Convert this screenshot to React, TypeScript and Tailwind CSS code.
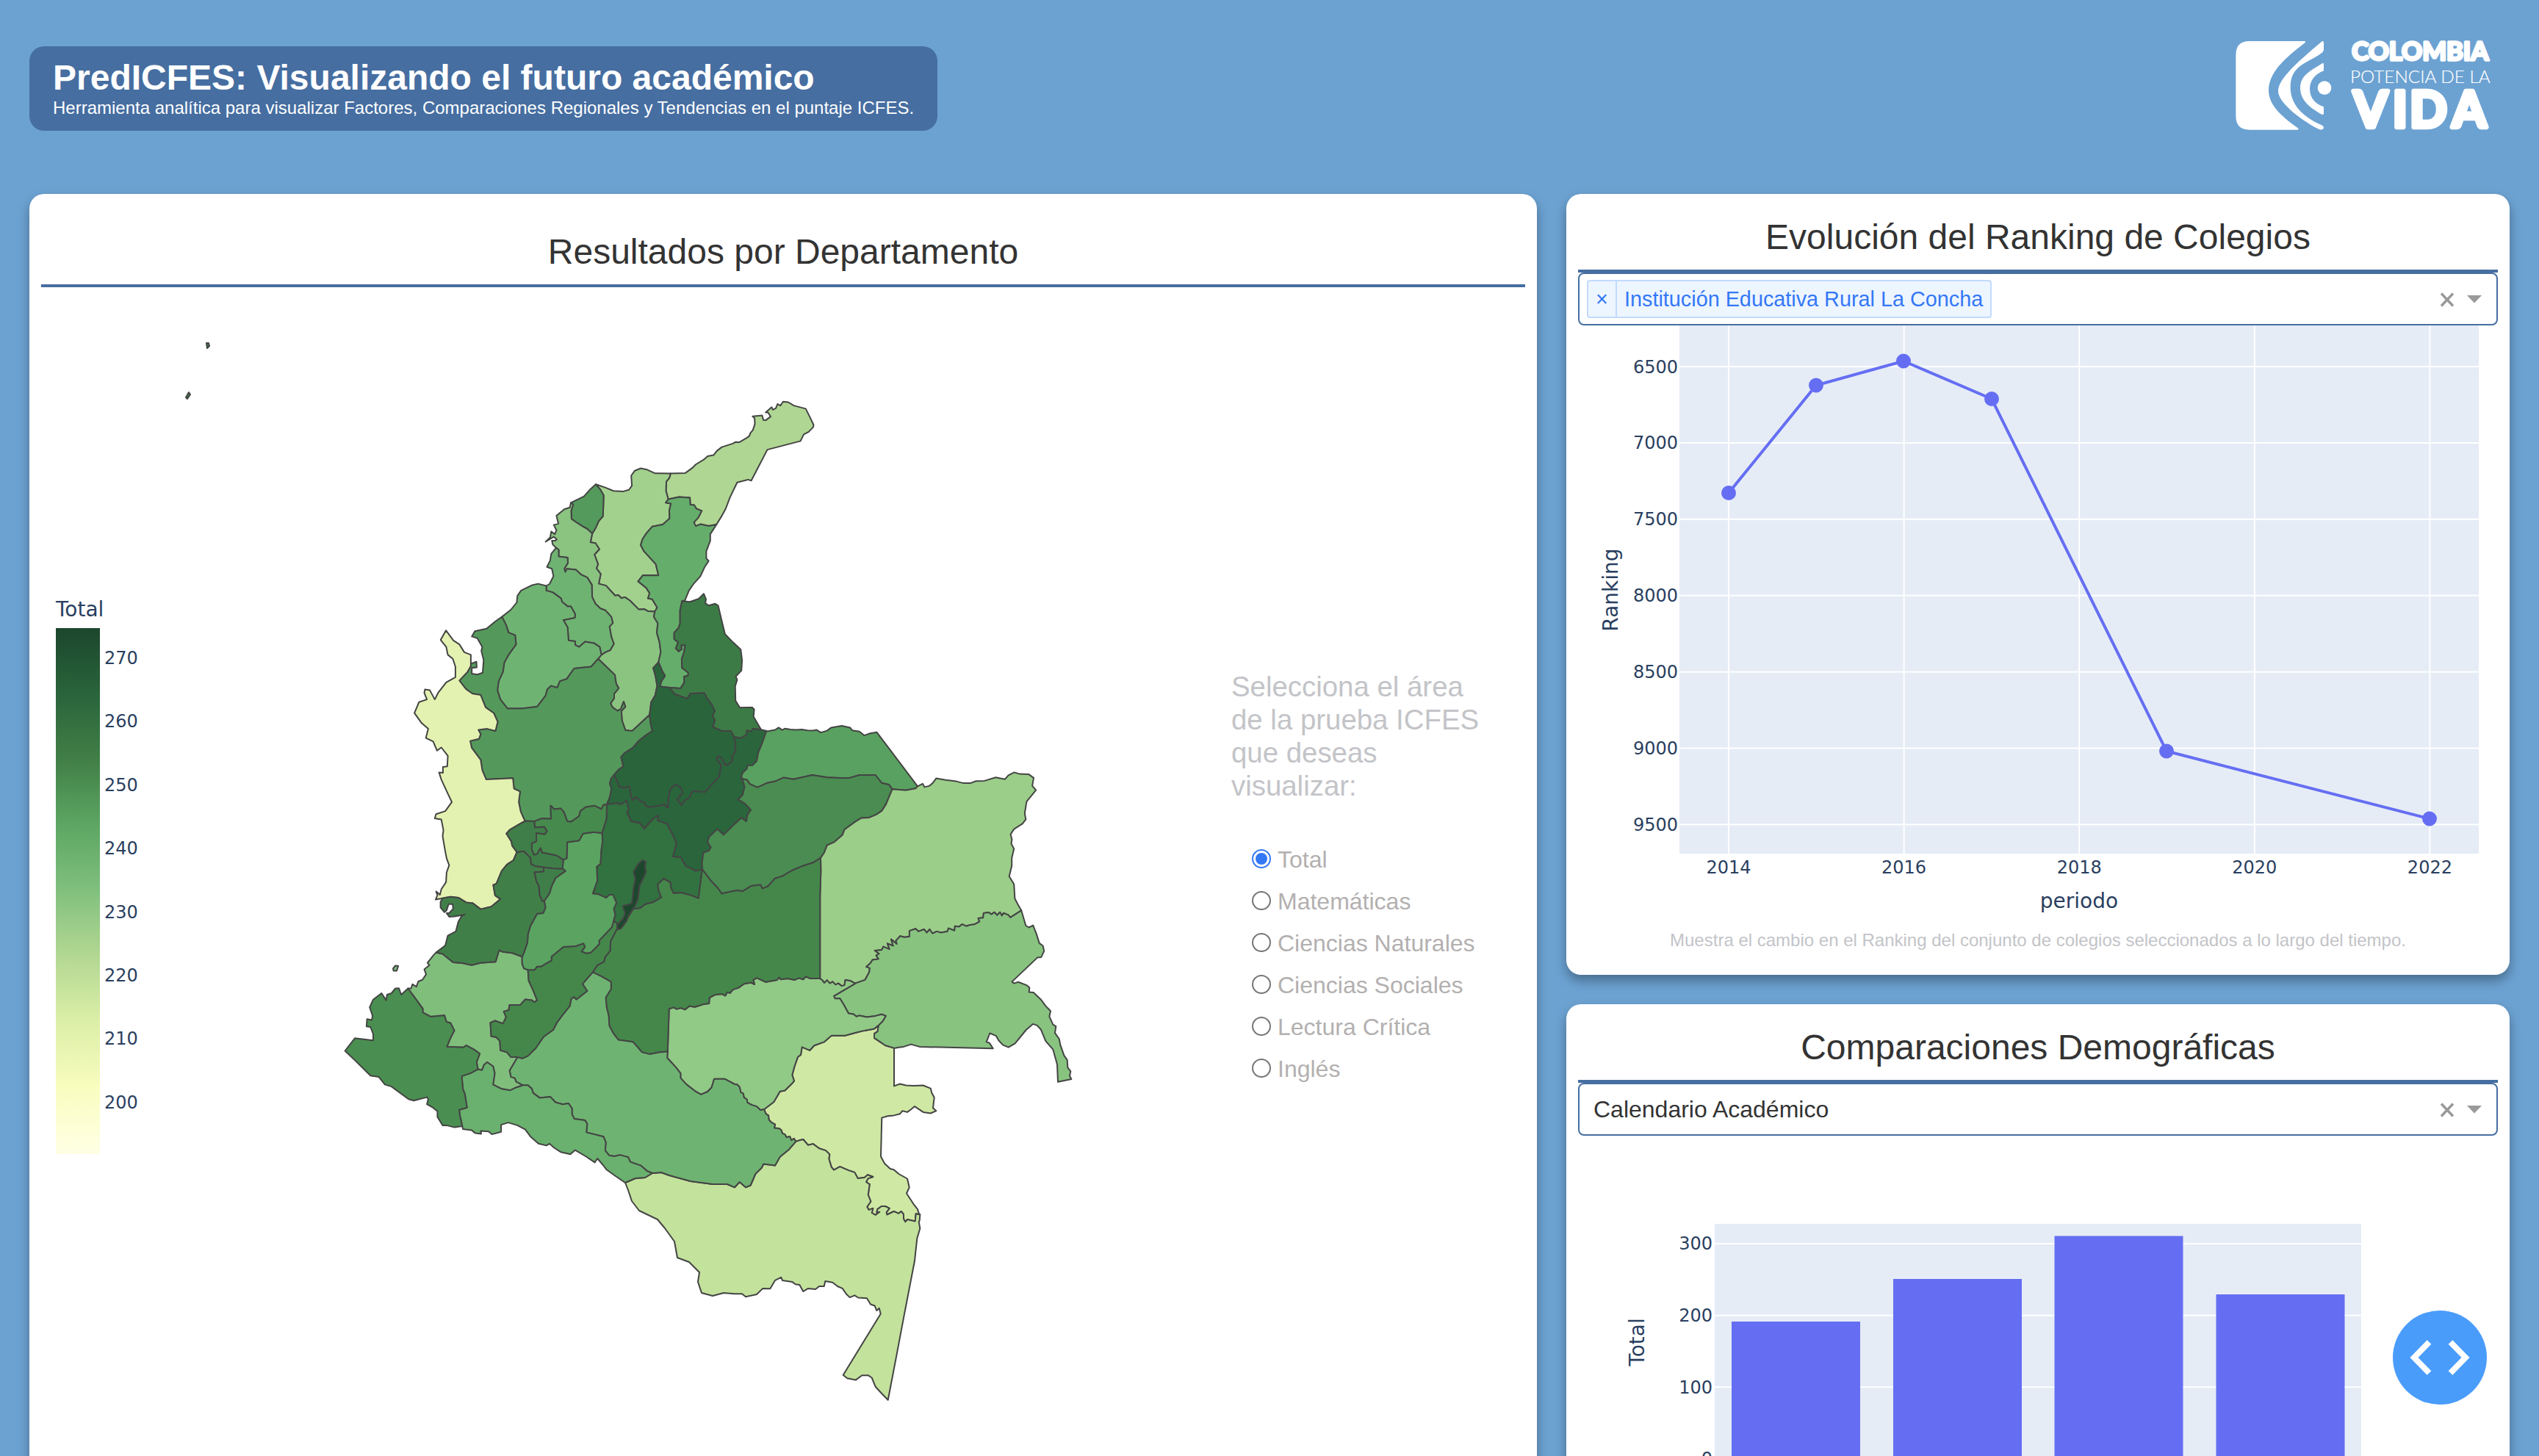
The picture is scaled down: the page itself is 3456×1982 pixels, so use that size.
import React from "react";

/* ---------- Map geometry: shared borders, digitised on five overlapping sheets ---------- */

type Sheet = [number, number, number, number];

const SHEETS: Record<string, Sheet> = {
  N: [440, 520, 0.44643, 0.35714],
  W: [440, 1000, 0.35714, 0.38265],
  E: [900, 900, 0.38265, 0.35714],
  S: [1000, 1300, 0.33333, 0.40816],
  C: [780, 1040, 0.33333, 0.33333],
  P: [0, 0, 1, 1],
};

const ARCS: Record<string, string> = {
  G1: "N 1059,349 1104,347 1127,326 1135,315 1160,296 1172,283 1190,279 1200,263 1215,248 1250,234 1256,229 1268,230 1290,214 1299,206 1302,195 1310,183 1316,160 1315,138 1309,131 1338,127 1342,145 1349,146 1364,132 1356,116 1349,116 1367,96 1371,106 1380,100 1385,84 1394,90 1402,75 1418,77 1435,90 1471,102 1483,132 1495,163 1494,172 1480,190 1465,200 1455,225 1354,258 1305,376 1295,372 1262,383 1240,440 1227,483 1213,515 1199,543",
  GM: "N 1059,349 1055,366 1046,380 1045,415 1052,447",
  GC: "N 1052,447 1085,438 1118,441 1119,468 1131,469 1138,483 1154,491 1144,516 1130,535 1136,549 1150,542 1175,549 1199,543",
  MC: "N 1052,447 1044,460 1060,463 1055,490 1056,520 1035,543 1003,551 985,577 973,600 968,622 978,645 1000,675 1014,695 1022,737 975,736 960,760 985,785 995,805 990,825 1003,828 1018,860 1011,875",
  M1: "N 831,390 860,402 885,415 915,417 932,411 941,395 939,357 950,338 968,329 985,333 1012,348 1059,349",
  MA: "N 831,390 845,410 855,432 853,511 840,530 830,558 820,578",
  MB: "N 820,578 815,611 830,614 842,637 827,658 838,695 833,710 846,732 840,769 862,776 890,814 900,812 909,824 920,820 935,833 962,867 980,866 990,874 1011,875",
  A1: "N 755,460 795,436 815,408 831,390",
  AB: "N 820,578 805,560 790,550 768,532 757,522 756,490 762,468 755,460",
  B1: "N 710,632 700,620 697,605 707,605 712,600 703,590 678,609 692,592 695,570 706,580 711,565 703,545 717,540 711,510 735,485 752,478 755,460",
  BS: "N 710,632 718,640 718,665 745,669 746,690 735,712 738,724 743,712 770,715 785,733 805,745 819,773 820,820 830,845 845,863 860,870 878,895 883,918 873,932 878,970 886,998 875,1022 860,1030 848,1040",
  SC: "N 680,777 680,795 700,802 725,825 728,838 745,855 755,855 768,885 767,899 732,907 745,935 748,985 768,988 768,1002 780,1010 798,990 825,995 843,1010 848,1040",
  S1: "N 680,777 690,770 702,740 697,712 682,705 692,680 695,655 710,632",
  CB: "N 848,1040 838,1055",
  BAn: "N 838,1055 889,1116 893,1150 901,1167 887,1188 887,1205 876,1225 882,1240 897,1253 907,1247 916,1218 921,1238 909,1255 911,1290 921,1327 942,1330 995,1268",
  BSa: "N 995,1268 1000,1220 1012,1195 1018,1158 1013,1120 1006,1090 1022,1068",
  BCe: "N 1022,1068 1029,1030 1025,990 1017,955 1020,920 1008,895 1011,875",
  Ce1: "N 1199,543 1180,580 1180,605 1168,645 1168,672 1175,682 1163,705 1150,740 1130,768 1115,795 1103,832 1094,835",
  CeNS: "N 1094,835 1088,870 1088,920 1083,938 1070,955 1070,980 1082,992 1075,1015 1084,1027 1093,1018 1091,1003 1103,1003 1100,1030 1093,1055 1094,1090 1113,1108 1112,1120 1100,1123 1101,1145 1089,1168 1055,1165",
  CeSa: "N 1055,1165 1027,1161 1030,1143 1042,1120 1033,1100 1022,1068",
  NS1: "N 1094,835 1118,838 1145,826 1160,807 1167,828 1165,843 1175,852 1195,845 1204,852 1214,905 1225,961 1250,993 1273,1020 1277,1060 1275,1100 1258,1122 1262,1135 1256,1160 1257,1215 1270,1241 1308,1240 1314,1248 1312,1275 1335,1325",
  NSSa: "N 1055,1165 1072,1190 1110,1207 1120,1187 1162,1186 1170,1205 1185,1230 1194,1255 1187,1270 1194,1290 1188,1315 1215,1330 1243,1330 1252,1352",
  NSBo: "N 1252,1352 1272,1358 1290,1345 1292,1328 1305,1332 1310,1322 1335,1325",
  SaBo: "E 260,288 265,320 262,348 253,362 253,380 235,397 225,392 215,370 203,362 197,372 213,395 207,440 190,458 168,485 155,499 112,496 100,520 85,530 72,549 57,528 76,500 68,480 50,470 32,490 26,520 25,550 C 389,178 380,176 375,165 355,170 335,173 310,176 298,172 292,158 275,152 258,135 243,148 236,130 230,92 205,98 187,90 178,65 167,45",
  SaAn: "C 167,45 N 900,1478 915,1465 908,1430 918,1415 945,1393 960,1370 980,1350 1003,1330 998,1300 995,1268",
  Bo1: "N 1335,1325 1352,1330",
  BoAr: "E 374,268 360,310 345,350 340,380 325,397 307,398 305,410 290,425 285,440",
  BoCa: "E 285,440 297,478 290,510 273,527 298,543 319,567 307,585 303,611 285,597 262,620 245,638 222,662 200,640 170,670 165,690 177,710 170,722 150,730 145,770 147,795",
  BoCu: "C 527,430 518,432 500,437 485,428 463,418 450,400 440,382 408,378 422,325 408,290 395,268 385,245 345,230 347,210 325,225 292,264 270,240 238,235 220,198 228,185 218,150 195,165 180,160 138,165",
  BoAn: "C 138,165 150,135 153,122 157,100 150,80 155,60 167,45",
  Ar1: "E 374,268 405,262 418,253 430,262 440,257 460,260 480,262 500,260 520,264 540,265 553,262 568,272 590,265 605,253 642,246 672,253 680,264 705,268 722,283 740,276 767,271 912,477",
  ArVi: "E 912,477 905,485 870,492 822,488",
  ArCa: "E 822,488 810,470 785,465 762,434 705,434 670,445 635,445 590,443 537,434 500,443 470,450 435,444 405,458 375,465 342,481 315,468 305,452 285,448 285,440",
  CaVi: "E 822,488 800,545 785,570 765,585 740,596 712,598 690,612 652,642 645,662 615,690 590,702 580,730 567,750",
  CaMe: "E 567,750 540,768 500,782 465,798 430,820 405,828 380,858 360,867 353,853 320,857 290,877 270,874 250,878 215,886 200,863 175,835 147,795",
  Vi1: "E 912,477 930,467 937,480 955,475 967,463 978,447 1012,453 1050,458 1075,465 1100,465 1120,457 1150,456 1190,443 1223,450 1235,435 1256,424 1275,430 1307,431 1325,445 1320,475 1333,492 1300,535 1293,580 1297,603 1285,620 1255,640 1243,660 1248,680 1245,695 1255,715 1247,750 1247,780 1238,820 1255,850 1258,905 1270,930 1281,950",
  ViGn: "E 1281,950 1242,977 1235,968 1218,960 1212,970 1205,957 1195,968 1185,957 1175,965 1165,958 1147,960 1145,978 1128,980 1132,993 1115,1003 1100,1005 1085,1010 1070,1003 1060,1012 1045,1010 1043,1027 1022,1018 1018,1030 995,1035 980,1030 965,1038 955,1022 945,1035 935,1022 915,1030 905,1020 883,1028 883,1050 865,1052 850,1048 835,1065 838,1078 818,1060 825,1085 805,1076 812,1098 790,1088 785,1100 760,1103 775,1115 765,1122 773,1135 752,1138 745,1150 730,1165 742,1170 740,1185 725,1215 690,1228",
  ViGv: "E 690,1228 672,1218 655,1215 652,1235 642,1238 630,1228 620,1233 610,1222 600,1228 590,1216 580,1226 573,1216 565,1210",
  ViMe: "E 565,1210 565,900 568,800 567,750",
  Gn1: "E 1281,950 1297,1008 1308,1015 1323,1007 1335,1040 1345,1075 1358,1085 1362,1105 1352,1128 1338,1130 1248,1222 1255,1228 1270,1223 1300,1235 1310,1245 S 1202,124 1220,125 1250,148 1270,170 1290,187 1285,205 1300,232 1312,238 1308,260 1325,280 1330,300 1345,335 1358,350 1360,375 1372,388 1368,403 1375,414 1320,423 1317,365 1300,315 1270,287 1250,248 1235,235 1218,230 1190,250 1145,295 1118,308 1095,300 1078,285 1068,270 1042,261 1028,290 1040,293 1055,312 900,309 755,306 720,298 690,306 670,308 651,311",
  GnVa: "S 651,311 615,302 590,288 570,277 570,262 583,255 587,235",
  GnGv: "S 587,235 605,220 617,203 600,198 575,203 540,207 510,202 497,205 485,197 465,195 445,165 430,145 410,145 405,137 492,95",
  Va1: "S 651,311 651,437 675,430 700,435 730,436 770,435 800,445 805,460 815,475 810,510 823,520 800,528 770,524 735,505 720,515 705,524 685,520 675,530 650,535 625,537 601,543 599,600 597,672 612,695 635,713 650,716 670,730 705,746 713,775 702,795 730,830 747,848 752,862 757,866",
  VaAm: "S 757,866 740,863 737,888 705,882 697,890 690,880 690,865 680,855 670,862 650,855 622,866 620,858 632,845 615,838 600,838 583,848 580,858 592,857 575,867 560,860 565,845 548,850 541,840 556,822 545,800 551,765 537,757 545,745 565,740 543,733 530,742 503,745 490,725 465,718 430,706 405,717 395,707 385,680 388,665 372,652 345,645 320,630 300,634 280,615 265,618 250,622",
  VaCq: "S 250,622 242,612 232,618 225,605 212,608 205,598 195,595 190,583 180,578 162,577 165,565 150,558 140,550 138,535 128,530 120,515",
  VaGv: "S 120,515 160,490 185,455 205,452 235,428 243,420 235,400 245,370 258,340 270,333 275,307 307,318 325,302 365,290 395,269 450,269 500,258 530,252 570,246 587,235",
  GvMe: "E 565,1210 550,1210 530,1210 515,1202 505,1213 490,1208 475,1215 450,1210 425,1213 420,1205 412,1215 372,1223 340,1207 328,1215 332,1232 320,1225 295,1230 275,1245 255,1252 245,1265 235,1262 228,1275 215,1268 190,1272 172,1283 170,1305 150,1308 120,1318 100,1315 85,1328 70,1322 55,1326 45,1320 28,1325",
  GvV: "E 28,1325 23,1488",
  GvCq: "E 23,1488 W 1311,1150 1345,1185 1362,1205 1362,1222 1385,1245 1420,1270 1440,1280 1465,1270 1480,1255 1490,1225 1510,1225 1530,1225 S 0,431 10,432 20,440 25,458 35,462 38,475 50,482 52,492 70,500 90,505 105,517 120,515",
  Am1: "S 757,866 755,885 752,890 757,912 745,945 735,1020 690,1210 660,1340 626,1484 600,1462 575,1440 560,1410 545,1402 520,1402 495,1417 460,1412 443,1401 596,1197 590,1178 580,1186 572,1170 555,1165 540,1145 505,1143 490,1135 470,1142 455,1130 440,1112 420,1105 400,1092 370,1088 365,1105 345,1105 330,1115 300,1112 280,1122 265,1100 248,1098 235,1090 195,1085 190,1075 165,1085 145,1113 115,1112 90,1132 45,1140 30,1130 0,1130 P 985,1760 970,1764 955,1760 950,1745 952,1732 938,1718 922,1712 918,1690 905,1672 895,1660 870,1648 860,1635 855,1620 851,1610",
  AmPu: "P 851,1610 865,1604 878,1603 888,1597",
  AmCq: "P 888,1597 900,1596 911,1600 940,1608 970,1612 990,1612 S 0,775 20,757 45,775 65,768 85,730 110,710 118,697 165,702 185,673 220,650 250,622",
  MeCq: "E 23,1488 W 1280,1130 1245,1137 1215,1130 1180,1093 1125,1086 1105,1062 1090,1035 1088,1000 1080,970 1077,935 1097,905 1097,880 1060,860 1027,845",
  HuCq: "W 1027,845 988,887 1006,912 965,942 955,933 945,940 940,965 910,1000 890,1025 877,1050 840,1075 810,1115 780,1143 758,1152 740,1147",
  CuCq: "W 740,1147 710,1195 715,1218 730,1222 735,1235 760,1247",
  PuCq: "W 760,1247 780,1247 795,1260 800,1275 825,1292 865,1288 885,1308 912,1315 935,1312 948,1330 948,1350 957,1367 998,1372 1006,1385 1003,1415 1068,1430 1077,1450 1075,1480 1090,1497 1110,1500 1130,1495 1162,1503 1170,1520 1210,1533 1235,1553 P 888,1597",
  Pu1: "P 851,1610 W 1110,1568 1080,1548 1065,1530 1045,1508 1035,1522 1000,1500 960,1478 942,1493 905,1485 880,1470 862,1455 850,1462 820,1455 790,1430 770,1405 740,1390 705,1380 678,1388 678,1413 643,1422 630,1412 600,1410 602,1420 580,1418 565,1407 532,1403 530,1393",
  PuNa: "W 530,1393 522,1360 518,1335 548,1327 540,1280 532,1260 528,1215 560,1205 590,1190",
  PuCu: "W 590,1190 605,1193 612,1175 625,1165 648,1180 654,1205 648,1245 680,1260 712,1265 735,1255 760,1247",
  Na1: "W 530,1393 500,1397 470,1390 455,1390 435,1360 435,1340 415,1325 395,1315 400,1297 395,1290 345,1302 325,1297 260,1252 235,1245 212,1218 180,1213 120,1158 83,1125 120,1080 190,1088 190,1065 180,1040 165,1038 167,1012 185,1015 188,1000 177,970 190,943 222,920 240,945 243,925 260,920 275,903 288,902 297,925 323,903",
  NaCu: "W 323,903 345,930 380,975 380,988 410,1003 462,998 470,1022 485,1025 500,1053 485,1080 472,1110 535,1112 545,1105 575,1120 597,1135 585,1165 590,1190",
  Cu1: "W 323,903 335,903 340,888 355,897 362,878 378,872 392,853 385,835 405,820 397,812 420,785 430,775",
  CuVa: "W 430,775 455,780 475,795 495,810 530,813 565,820 600,812 657,808 670,767 685,773 720,777 758,790",
  CuTo: "W 758,790 758,815 765,832 780,837",
  CuHu: "W 780,837 783,875 800,910 815,945 805,952 795,945 770,942 750,962 710,962 707,980 688,985 697,1005 685,1028 655,1018 637,1025 640,1073 660,1077 673,1090 675,1123 700,1130 715,1147 740,1147",
  HuTo: "W 780,837 805,837 815,825 830,825 870,803 870,790 915,755 960,753 992,743 998,755 985,772 1005,778 1020,775 1052,745 1052,732 1100,685 1107,662",
  HuCn: "W 1107,662 1120,672 1120,690",
  HuMe: "W 1120,690 1095,735 1093,770 1075,790 1070,808 1045,820 1027,845",
  ToCn: "W 1107,662 1113,640 1108,620 1118,598 1105,570 1090,570 1078,580 1050,568 1028,565 1045,520 1043,470 1057,460 1060,410 1065,380 1063,350",
  ToCl: "W 1063,350 1030,347 990,352 975,377 950,380 930,383 928,440 915,445",
  ToRi: "W 915,445 912,477",
  ToQu: "W 912,477 923,485 885,510 870,540 862,565 842,592",
  ToVa: "W 842,592 847,615 838,635 815,637 790,680 780,710 778,740 765,775 758,790",
  Vl1: "W 430,775 465,750 475,715 505,700 515,665 528,645 540,640 500,647 480,648 470,635 480,635 495,620 493,603 478,603 470,625 462,632 447,615 447,595 455,582",
  VlCh: "W 455,582 485,577 515,580 545,597 570,600 600,621 640,612 675,585 655,572 648,535 660,530 680,485 700,462 725,447 738,418",
  VlRi: "W 738,418 765,415 790,438 792,460 808,468 840,472",
  VlQu: "W 840,472 840,487 805,490 812,520 822,540 825,570 835,592 842,592",
  RiQu: "W 840,472 875,476 912,477",
  RiCh: "W 738,418 720,395 717,380 698,352 712,338 745,320 770,307",
  RiAn: "W 770,307 805,308",
  RiCl: "W 805,308 807,330 843,328 853,343 845,355 812,350 812,380 795,387 795,408 803,427 815,425 828,403 835,420 850,422 890,430 915,445",
  ClAn: "W 805,308 835,298 868,300 867,253 880,265 905,263 917,275 930,308 945,310 975,290 980,272 1000,258 1035,253 1060,265 1068,250 C 138,165",
  ClCn: "C 138,165 W 1080,300 1063,350",
  CnMe: "C 527,430 512,548 480,535 440,525 410,527 400,505 398,483 370,468 345,492 350,520 360,545 325,565 295,572 275,588 245,592",
  BgMe: "C 245,592 225,625 215,645 195,672 W 1120,690",
  An1: "N 545,895 525,912 498,940 462,950 453,970 470,977 485,1010 482,1025 489,1060 486,1108 470,1115 453,1112 453,1090 468,1088 467,1066 450,1074 450,1082",
  AnCh: "N 450,1082 440,1105 415,1138 435,1170 455,1188 480,1193 495,1240 520,1262 532,1295 525,1330 500,1322 473,1326 480,1342 475,1360 448,1368 453,1395 465,1415 480,1440 485,1480 497,1515 W 723,155 727,192 750,202 745,240 753,275 765,300 770,307",
  CoAn: "N 838,1055 817,1085 765,1092 742,1132 722,1140 713,1165 695,1158 683,1172 678,1195 652,1238 605,1245 562,1245 540,1210 531,1175 535,1140 548,1105 552,1070 565,1040 588,1000 585,965 565,955 557,925 545,895",
  Co1: "N 545,895 572,868 590,840 592,815 603,795 635,775 655,769 680,777",
  Ch1: "N 450,1082 450,1040 430,1030 415,1000 397,985 374,947 358,983 375,1010 380,1040 395,1055 403,1085 403,1125 375,1145 350,1185 340,1210 325,1175 310,1172 308,1185 316,1210 292,1220 278,1262 300,1300 320,1322 313,1357 335,1370 347,1405 360,1393 380,1425 378,1465 365,1467 365,1490 353,1488 360,1515 W 475,210 490,240 465,272 430,283 425,298 450,302 458,340 455,360 462,400 470,440 480,465 470,490 468,525 450,550 445,570 430,558 435,572 428,587 455,582",
  Bg: "C 285,393 298,400 293,420 298,440 290,460 272,495 265,550 255,575 245,592 225,622 218,640 195,672 183,676 180,660 205,630 213,610 203,580 240,570 248,500 255,470 247,440 265,410 280,395",
  Isl: "W 266,832 275,822 286,823 280,840 268,840",
  SanA: "P 281,467 284,467 285,471 282,474",
  Prov: "P 257,534 259,537 255,543 253,541",
};

const DEPARTMENTS: { name: string; fill: string; border: string }[] = [
  { name: "La Guajira", fill: "#afd692", border: "G1 -GC -GM" },
  { name: "Magdalena", fill: "#a2d18d", border: "M1 GM MC -MB -MA" },
  { name: "Atlántico", fill: "#549a5c", border: "A1 MA AB" },
  { name: "Bolívar", fill: "#8bc381", border: "B1 -AB MB -BCe -BSa -BAn -CB -BS" },
  { name: "Cesar", fill: "#65ad6b", border: "Ce1 CeNS CeSa BCe -MC GC" },
  { name: "Sucre", fill: "#6fb372", border: "S1 BS -SC" },
  { name: "Córdoba", fill: "#6fb372", border: "Co1 SC CB CoAn" },
  { name: "Antioquia", fill: "#54995b", border: "An1 AnCh RiAn ClAn BoAn SaAn -BAn CoAn" },
  { name: "Chocó", fill: "#e3f2b0", border: "Ch1 VlCh RiCh -AnCh" },
  { name: "Norte de Santander", fill: "#3c7b46", border: "NS1 -NSBo -NSSa -CeNS" },
  { name: "Santander", fill: "#29643b", border: "BSa -CeSa NSSa SaBo SaAn" },
  { name: "Boyacá", fill: "#2a653c", border: "Bo1 BoAr BoCa BoCu BoAn -SaBo NSBo" },
  { name: "Arauca", fill: "#59a160", border: "Ar1 ArVi ArCa -BoAr" },
  { name: "Casanare", fill: "#4a8c51", border: "CaVi CaMe -BoCa -ArCa" },
  { name: "Vichada", fill: "#9bce89", border: "Vi1 ViGn ViGv ViMe -CaVi -ArVi" },
  { name: "Guainía", fill: "#88c380", border: "Gn1 GnVa GnGv -ViGn" },
  { name: "Vaupés", fill: "#cfe8a3", border: "Va1 VaAm VaCq VaGv -GnVa" },
  { name: "Guaviare", fill: "#91c986", border: "GvMe GvV GvCq VaGv GnGv ViGv" },
  { name: "Amazonas", fill: "#c3e29c", border: "Am1 AmPu AmCq -VaAm" },
  { name: "Meta", fill: "#45874b", border: "-CaMe -ViMe GvMe GvV MeCq -HuMe -BgMe -CnMe" },
  { name: "Caquetá", fill: "#6fb372", border: "MeCq HuCq CuCq PuCq AmCq VaCq -GvCq" },
  { name: "Putumayo", fill: "#6ab06e", border: "Pu1 PuNa PuCu PuCq -AmPu" },
  { name: "Nariño", fill: "#4a8f51", border: "Na1 NaCu -PuNa" },
  { name: "Cauca", fill: "#80be7c", border: "Cu1 CuVa CuTo CuHu CuCq -PuCu -NaCu" },
  { name: "Huila", fill: "#45874b", border: "HuTo HuCn HuMe HuCq -CuHu" },
  { name: "Tolima", fill: "#5aa361", border: "ToCn ToCl ToRi ToQu ToVa CuTo HuTo" },
  { name: "Valle del Cauca", fill: "#417f49", border: "Vl1 VlCh VlRi VlQu ToVa -CuVa" },
  { name: "Quindío", fill: "#3f7e48", border: "-VlQu RiQu ToQu" },
  { name: "Risaralda", fill: "#3f7e48", border: "RiCh RiAn RiCl ToRi -RiQu -VlRi" },
  { name: "Caldas", fill: "#468a4d", border: "ClAn ClCn ToCl -RiCl" },
  { name: "Cundinamarca", fill: "#327140", border: "-BoCu CnMe BgMe -HuCn ToCn -ClCn" },
  { name: "Bogotá", fill: "#1c472d", border: "Bg" },
  { name: "Gorgona", fill: "#80be7c", border: "Isl" },
  { name: "San Andrés", fill: "#45874b", border: "SanA" },
  { name: "Providencia", fill: "#45874b", border: "Prov" },
];

function decode(arc: string): string[] {
  let sheet = SHEETS.P;
  const out: string[] = [];
  for (const token of arc.split(" ")) {
    if (SHEETS[token]) {
      sheet = SHEETS[token];
    } else {
      const [x, y] = token.split(",").map(Number);
      out.push(`${(sheet[0] + x * sheet[2]).toFixed(1)} ${(sheet[1] + y * sheet[3]).toFixed(1)}`);
    }
  }
  return out;
}

function outline(border: string): string {
  const points = border
    .split(" ")
    .flatMap((key) => (key[0] === "-" ? decode(ARCS[key.slice(1)]).reverse() : decode(ARCS[key])));
  return `M${points.join("L")}Z`;
}

function ColombiaMap() {
  return (
    <svg className="block shrink-0" width={1280} height={1591} viewBox="240 391 1280 1591">
      {DEPARTMENTS.map((d) => (
        <path key={d.name} d={outline(d.border)} fill={d.fill} stroke="#444444" strokeWidth={2} strokeLinejoin="round" />
      ))}
    </svg>
  );
}

/* ---------- Colour scale ---------- */

function ColorScale() {
  return (
    <div className="w-[164px] shrink-0 pt-[414px] font-['DejaVu_Sans'] text-[#2a3f5f]">
      <div className="h-[50px] text-[28px] leading-[50px]">Total</div>
      <div className="flex">
        <div className="h-[716px] w-[60px] bg-[linear-gradient(to_top,#ffffe5,#f9fdbf,#dcefa7,#b3d893,#81c07e,#5da663,#417f47,#29643b,#1c472d)]" />
        <div className="flex flex-col gap-[56.4px] pl-[6px] pt-[26px] text-[24px] leading-[30px]">
          {[270, 260, 250, 240, 230, 220, 210, 200].map((v) => (
            <div key={v}>{v}</div>
          ))}
        </div>
      </div>
    </div>
  );
}

/* ---------- Subject selector ---------- */

const SUBJECTS = ["Total", "Matemáticas", "Ciencias Naturales", "Ciencias Sociales", "Lectura Crítica", "Inglés"];

function SubjectSelector() {
  return (
    <div className="ml-[156px] w-[370px] pt-[521px]">
      <p className="text-[38.4px] leading-[45px] text-[#c3c4c8]">
        Selecciona el área
        <br />
        de la prueba ICFES
        <br />
        que deseas
        <br />
        visualizar:
      </p>
      <div className="flex flex-col pl-[28px] pt-[50px]">
        {SUBJECTS.map((s, i) => (
          <label key={s} className="flex h-[57px] items-center gap-[9px] text-[32px] leading-[57px] text-[#b3b0b0]">
            {i === 0 ? (
              <span className="-mt-[4px] flex size-[26px] items-center justify-center rounded-full border-2 border-[#3478f6] bg-white">
                <span className="size-[16px] rounded-full bg-[#3478f6]" />
              </span>
            ) : (
              <span className="-mt-[4px] size-[26px] rounded-full border-2 border-[#767676] bg-white" />
            )}
            {s}
          </label>
        ))}
      </div>
    </div>
  );
}

/* ---------- Dropdown ---------- */

function Dropdown({ children }: { children: React.ReactNode }) {
  return (
    <div className="mx-4 flex h-[72px] items-center rounded-[8px] border-2 border-[#466ea1] bg-white pl-[10px] pr-[20px]">
      <div className="flex flex-1 items-center">{children}</div>
      <svg width={60} height={40} viewBox="0 0 60 40">
        <path d="M5 12.500L21 29.500M21 12.500L5 29.500" stroke="#999999" strokeWidth={3.4} fill="none" />
        <path d="M40 15H60L50 25.500Z" fill="#999999" />
      </svg>
    </div>
  );
}

/* ---------- Charts ---------- */

const YEARS = [2014, 2016, 2018, 2020, 2022];
const RANKS = [6500, 7000, 7500, 8000, 8500, 9000, 9500];
const SERIES: [number, number][] = [
  [2353, 671],
  [2472, 524.5],
  [2591, 491.5],
  [2711, 543],
  [2949, 1022.5],
  [3307, 1114.5],
];

function RankingChart() {
  return (
    <svg className="block font-['DejaVu_Sans']" width={1284} height={823} viewBox="2132 443 1284 823" fill="#2a3f5f">
      <rect x={2286} y={443} width={1088} height={719} fill="#e5ecf6" />
      {YEARS.map((y, i) => (
        <g key={y}>
          <rect x={2352 + i * 238.6} y={443} width={2} height={719} fill="#fff" />
          <text x={2353 + i * 238.6} y={1189} fontSize={24} textAnchor="middle">
            {y}
          </text>
        </g>
      ))}
      {RANKS.map((r, i) => (
        <g key={r}>
          <rect x={2286} y={498 + i * 103.9} width={1088} height={2} fill="#fff" />
          <text x={2284} y={507.500 + i * 103.9} fontSize={24} textAnchor="end">
            {r}
          </text>
        </g>
      ))}
      <polyline points={SERIES.map((p) => p.join(",")).join(" ")} fill="none" stroke="#656ef2" strokeWidth={4} />
      {SERIES.map(([x, y]) => (
        <circle key={x} cx={x} cy={y} r={10} fill="#656ef2" />
      ))}
      <text x={2830} y={1236} fontSize={28} textAnchor="middle">
        periodo
      </text>
      <text transform="translate(2202 803) rotate(-90)" fontSize={28} textAnchor="middle">
        Ranking
      </text>
    </svg>
  );
}

const BARS = [
  { x: 2357, top: 1799 },
  { x: 2577, top: 1741 },
  { x: 2796.500, top: 1682.500 },
  { x: 3016.500, top: 1762 },
];

function DemographicsChart() {
  return (
    <svg className="block font-['DejaVu_Sans']" width={1284} height={480} viewBox="2132 1546 1284 480" fill="#2a3f5f">
      <rect x={2334} y={1666} width={880} height={400} fill="#e5ecf6" />
      {[300, 200, 100, 0].map((v, i) => (
        <g key={v}>
          <rect x={2334} y={1692 + i * 97.6} width={880} height={2} fill="#fff" />
          <text x={2331} y={1701 + i * 97.8} fontSize={24} textAnchor="end">
            {v}
          </text>
        </g>
      ))}
      {BARS.map((b) => (
        <rect key={b.x} x={b.x} y={b.top} width={175} height={400} fill="#656ef2" />
      ))}
      <text transform="translate(2238 1827) rotate(-90)" fontSize={28} textAnchor="middle">
        Total
      </text>
    </svg>
  );
}

/* ---------- Logo ---------- */

function Logo() {
  return (
    <svg className="block shrink-0" width={476} height={200} viewBox="0 0 1428 600" fill="#fff">
      <path d="M246 108H472Q477 111 472 115C390 178 324 236 324 310C324 374 388 424 445 464Q447 470 440 470H246Q190 470 190 414V164Q190 108 246 108Z" />
      <path d="M540 110Q549 104 549 114V140Q549 151 538 158C480 200 413 205 413 297C413 370 468 420 543 452Q549 456 549 462Q546 472 532 469C478 444 363 365 363 312C363 262 440 195 540 110Z" />
      <path d="M543 199Q549 196 549 202V229C515 241 492 268 492 303C492 340 515 365 549 376V403Q549 410 541 407C496 383 453 350 453 300C453 250 490 232 543 199Z" />
      <circle cx={552} cy={299} r={28} />
      <g className="font-['Lato']" stroke="#fff" strokeLinejoin="round">
        <text x={664} y={186} fontSize={102} fontWeight={700} strokeWidth={10} textLength={558} lengthAdjust="spacingAndGlyphs">
          COLOMBIA
        </text>
        <text x={657} y={278} fontSize={73} fontWeight={300} strokeWidth={0.500} textLength={572} lengthAdjust="spacingAndGlyphs">
          POTENCIA DE LA
        </text>
        <text x="671 831 901 1074" y={460} fontSize={199} fontWeight={700} strokeWidth={19}>
          VIDA
        </text>
      </g>
    </svg>
  );
}

/* ---------- Page ---------- */

function CardTitle({ children }: { children: React.ReactNode }) {
  return (
    <h2 className="mx-4 border-b-4 border-[#466ea1] pb-[18px] text-center text-[48px] leading-[52px] text-[#333333]">
      {children}
    </h2>
  );
}

export default function App() {
  return (
    <div className="relative flex h-[1982px] w-[3456px] flex-col overflow-hidden bg-[#6ca2d2] font-['Liberation_Sans',sans-serif]">
      <header className="flex h-[264px] shrink-0 items-start justify-between pl-10 pt-5">
        <div className="mt-[43px] h-[115px] w-[1236px] rounded-[20px] bg-[#466ea1] px-8 pt-[17px] text-white">
          <h1 className="whitespace-nowrap text-[48px] font-bold leading-[52px]">
            PredICFES: Visualizando el futuro académico
          </h1>
          <p className="mt-px whitespace-nowrap text-[24px] leading-[28px]">
            Herramienta analítica para visualizar Factores, Comparaciones Regionales y Tendencias en el puntaje ICFES.
          </p>
        </div>
        <Logo />
      </header>

      <main className="flex shrink-0 gap-10 pl-10">
        <section className="h-[1800px] w-[2052px] rounded-[20px] bg-white pt-[53px] shadow-[0_8px_16px_rgba(0,0,0,0.33)]">
          <CardTitle>Resultados por Departamento</CardTitle>
          <div className="flex pl-9">
            <ColorScale />
            <ColombiaMap />
            <SubjectSelector />
          </div>
        </section>

        <div className="flex w-[1284px] flex-col gap-10">
          <section className="h-[1063px] rounded-[20px] bg-white pt-[33px] shadow-[0_8px_16px_rgba(0,0,0,0.33)]">
            <CardTitle>Evolución del Ranking de Colegios</CardTitle>
            <Dropdown>
              <div className="flex h-[52px] items-center rounded-[4px] border-2 border-[#c2dbff] bg-[#edf5ff] text-[28.8px] leading-[48px] text-[#3478f6]">
                <span className="flex h-full w-[39px] items-center justify-center border-r-2 border-[#c2dbff]">×</span>
                <span className="whitespace-nowrap px-[10px]">Institución Educativa Rural La Concha</span>
              </div>
            </Dropdown>
            <RankingChart />
            <p className="text-center text-[24px] leading-[28px] text-[#c3c4c8]">
              Muestra el cambio en el Ranking del conjunto de colegios seleccionados a lo largo del tiempo.
            </p>
          </section>

          <section className="h-[800px] rounded-[20px] bg-white pt-[33px] shadow-[0_8px_16px_rgba(0,0,0,0.33)]">
            <CardTitle>Comparaciones Demográficas</CardTitle>
            <Dropdown>
              <span className="pl-[9px] text-[32px] leading-[40px] text-[#333333]">Calendario Académico</span>
            </Dropdown>
            <DemographicsChart />
          </section>
        </div>
      </main>

      <button className="absolute right-[71px] top-[1784px] size-32 rounded-full bg-[#4a9cfb]">
        <svg className="block" width={128} height={128} viewBox="0 0 128 128" fill="none" stroke="#fff" strokeWidth={8}>
          <path d="M49.500 43L29 64L49.500 85M78.500 43L99 64L78.500 85" />
        </svg>
      </button>
    </div>
  );
}
